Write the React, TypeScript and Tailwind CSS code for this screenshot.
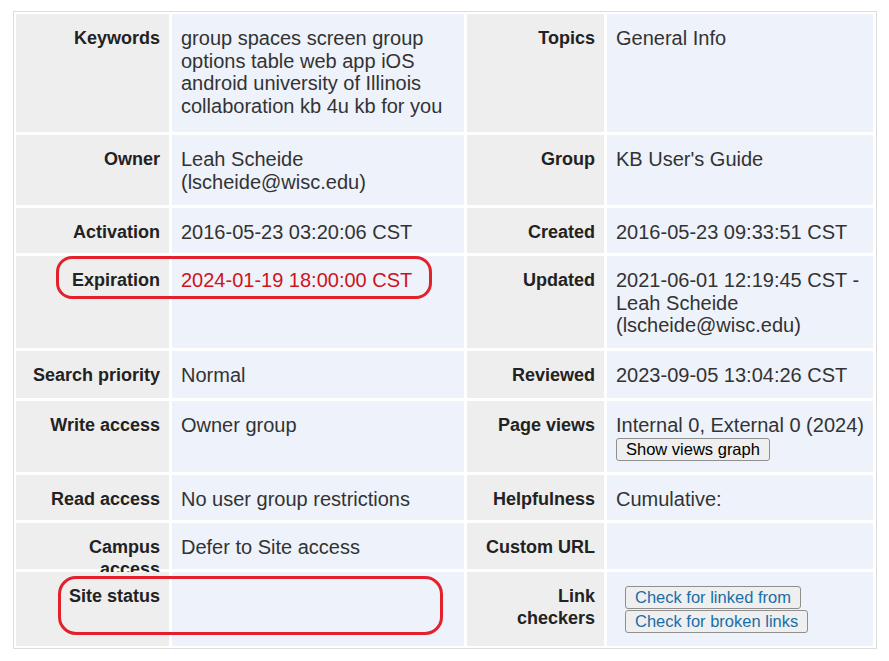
import React from "react";

const L = ({ children }: { children?: React.ReactNode }) => (
  <div className="bg-[#eeeeee] text-right font-bold text-[18px] leading-[22px] text-[#222] pt-[13px] pr-[9px] pl-2">{children}</div>
);
const V = ({ children, red }: { children?: React.ReactNode; red?: boolean }) => (
  <div className={`bg-[#eef2fa] text-[20px] leading-[22.5px] pt-[13px] pl-[9px] pr-2 ${red ? "text-[#d0121b]" : "text-[#333]"}`}>{children}</div>
);
const btn = "bg-[#efefef] border border-[#8f8f8f] rounded-[3px] px-[9px] text-[16.5px] leading-[21px]";

export default function App() {
  return (
    <div className="w-[889px] h-[661px] bg-white relative" style={{ fontFamily: '"Liberation Sans", Arial, sans-serif' }}>
      <div className="absolute left-[13px] top-[11px] w-[864px] border border-[#dddddd] p-[2px] bg-white">
        <div className="grid grid-cols-[153px_292px_137px_266px] grid-rows-[118px_70px_45px_92px_47px_71px_45px_46px_74px] gap-[3px]">
          <L>Keywords</L>
          <V>group spaces screen group options table web app iOS android university of Illinois collaboration kb 4u kb for you</V>
          <L>Topics</L>
          <V>General Info</V>
          <L>Owner</L>
          <V>Leah Scheide<br />(lscheide@wisc.edu)</V>
          <L>Group</L>
          <V>KB User's Guide</V>
          <L>Activation</L>
          <V>2016-05-23 03:20:06 CST</V>
          <L>Created</L>
          <V>2016-05-23 09:33:51 CST</V>
          <L>Expiration</L>
          <V red>2024-01-19 18:00:00 CST</V>
          <L>Updated</L>
          <V>2021-06-01 12:19:45 CST -<br />Leah Scheide<br />(lscheide@wisc.edu)</V>
          <L>Search priority</L>
          <V>Normal</V>
          <L>Reviewed</L>
          <V>2023-09-05 13:04:26 CST</V>
          <L>Write access</L>
          <V>Owner group</V>
          <L>Page views</L>
          <V>
            Internal 0, External 0 (2024)
            <div><button className={`${btn} text-black`}>Show views graph</button></div>
          </V>
          <L>Read access</L>
          <V>No user group restrictions</V>
          <L>Helpfulness</L>
          <V>Cumulative:</V>
          <L>Campus access</L>
          <V>Defer to Site access</V>
          <L>Custom URL</L>
          <V></V>
          <L>Site status</L>
          <V></V>
          <L>Link checkers</L>
          <div className="bg-[#eef2fa] pt-[14px] pl-[18px] flex flex-col items-start gap-[1px]">
            <button className={`${btn} text-[#1a6ea8]`}>Check for linked from</button>
            <button className={`${btn} text-[#1a6ea8]`}>Check for broken links</button>
          </div>
        </div>
      </div>
      <div className="absolute left-[56px] top-[256px] w-[376px] h-[43px] border-[3px] border-[#e3202b] rounded-[16px]" />
      <div className="absolute left-[58px] top-[576px] w-[385px] h-[59px] border-[3px] border-[#e3202b] rounded-[18px]" />
    </div>
  );
}
